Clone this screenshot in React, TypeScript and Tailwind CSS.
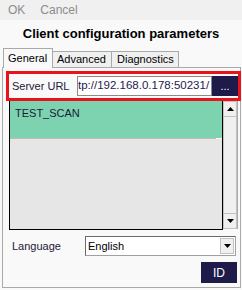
function Arrow({ down }: { down?: boolean }) {
  return (
    <svg width="7" height="4" viewBox="0 0 7 4" className="block">
      {down ? <path d="M0 0h7L3.5 4z" fill="#000" /> : <path d="M0 4h7L3.5 0z" fill="#000" />}
    </svg>
  );
}

export default function App() {
  return (
    <div className="w-[242px] h-[290px] bg-[#f9f9f9] font-['Liberation_Sans',Arial,sans-serif] text-[11px] text-[#1b1838] overflow-hidden flex flex-col">
      {/* menu bar */}
      <div className="h-[20px] bg-[#f0f0f0] flex items-center gap-[15px] pl-[8px] text-[12px] text-[#8c8c8c] shrink-0">
        <span>OK</span>
        <span>Cancel</span>
      </div>

      <div className="h-[28px] flex items-center justify-center text-[13px] font-bold text-black shrink-0">
        Client configuration parameters
      </div>

      {/* tabs */}
      <div className="h-[19px] flex items-end pl-[3px] shrink-0">
        <div className="relative z-10 -mb-px h-[20px] w-[50px] bg-[#f9f9f9] border border-b-0 border-[#a9a9a9] flex items-center pl-[4px] text-black">
          General
        </div>
        <div className="h-[16px] w-[59px] bg-[#f0f0f0] border border-l-0 border-b-0 border-[#a9a9a9] flex items-center pl-[4px] text-black">
          Advanced
        </div>
        <div className="h-[16px] w-[67px] bg-[#f0f0f0] border border-l-0 border-b-0 border-[#a9a9a9] flex items-center pl-[5px] text-black">
          Diagnostics
        </div>
      </div>

      {/* panel */}
      <div className="ml-[2px] w-[239px] h-[221px] border border-[#a9a9a9] flex flex-col shrink-0">
        <div className="mt-[3px] ml-[3px] w-[235px] h-[30px] border-[3px] border-[#e8131b] flex items-center shrink-0">
          <span className="w-[68px] pl-[3px]">Server URL</span>
          <div className="w-[135px] h-[20px] bg-white border border-[#8a8a8a] flex items-center overflow-hidden whitespace-nowrap text-[11.5px] text-[#1f1a4e]">
            tp://192.168.0.178:50231/
          </div>
          <div className="w-[26px] h-[20px] bg-[#1e1a4a] text-white flex items-center justify-center text-[11px]">
            ...
          </div>
        </div>

        {/* list */}
        <div className="ml-[6px] w-[229px] h-[129px] flex shrink-0">
          <div className="flex-1 border-l border-r border-b border-black flex flex-col">
            <div className="h-[37px] bg-[#7dd3b0] pl-[5px] pt-[4px] text-[11px] text-[#1b1838]">TEST_SCAN</div>
            <div className="h-px bg-[#bcbcbc] mr-[6px]" />
            <div className="flex-1 bg-[#e6e6e6]" />
          </div>
          <div className="w-[15px] h-[128px] flex flex-col bg-[#f0f0f0] border-r border-[#a9a9a9]">
            <div className="h-[16px] border border-[#c2c2c2] bg-[#f0f0f0] flex items-center justify-center">
              <Arrow />
            </div>
            <div className="flex-1 border-x border-[#c2c2c2]" />
            <div className="h-[16px] border border-[#c2c2c2] bg-[#f0f0f0] flex items-center justify-center">
              <Arrow down />
            </div>
          </div>
        </div>

        {/* language */}
        <div className="mt-[6px] h-[20px] flex items-center shrink-0">
          <span className="w-[82px] pl-[9px]">Language</span>
          <div className="w-[151px] h-[20px] bg-white border border-[#a0a0a0] border-t-[#6a6a6a] border-l-[#6a6a6a] flex items-center">
            <span className="flex-1 pl-[2px] text-black">English</span>
            <div className="w-[14px] h-[16px] mr-px bg-[#f0f0f0] border border-[#c2c2c2] flex items-center justify-center">
              <Arrow down />
            </div>
          </div>
        </div>

        <div className="mt-[6px] mr-[3px] self-end w-[36px] h-[21px] bg-[#1e1a4a] text-white text-[12px] flex items-center justify-center shrink-0">
          ID
        </div>
      </div>
    </div>
  );
}
